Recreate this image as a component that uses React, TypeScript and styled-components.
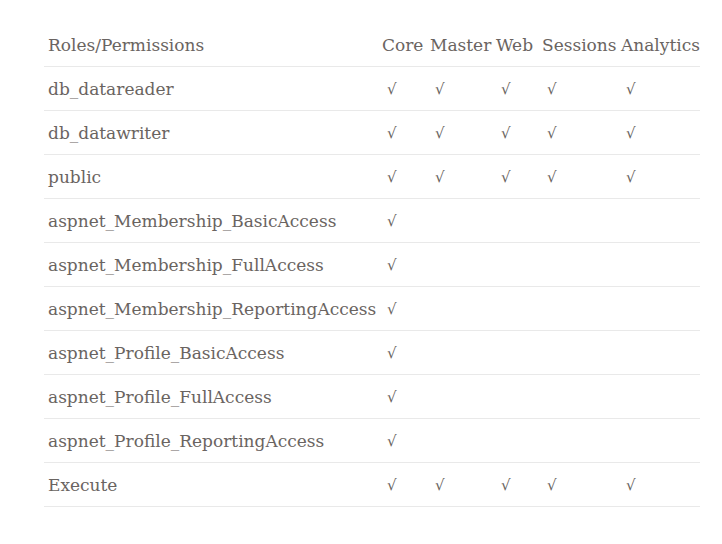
import React from "react";
import styled, { createGlobalStyle } from "styled-components";

const Global = createGlobalStyle`
  html, body { margin: 0; padding: 0; background: #ffffff; }
  body { font-family: "DejaVu Serif", "Liberation Serif", serif; }
`;

const Wrapper = styled.div`
  padding: 23px 22px 0 44px;
`;

const Table = styled.table`
  width: 656px;
  border-collapse: collapse;
  table-layout: fixed;
  color: #6a6461;
  font-size: 17px;

  th, td {
    box-sizing: border-box;
  }
`;

const HeadCell = styled.th<{ $w: number }>`
  width: ${(p) => p.$w}px;
  height: 43px;
  padding: 2px 0 0 4px;
  text-align: left;
  font-weight: normal;
  white-space: nowrap;
  border-bottom: 1px solid #e9e9e9;
`;

const Row = styled.tr``;

const NameCell = styled.td`
  height: 44px;
  padding: 2px 0 0 4px;
  white-space: nowrap;
  border-bottom: 1px solid #e9e9e9;
`;

const CheckCell = styled.td`
  padding: 2px 0 0 9px;
  font-family: "DejaVu Sans", sans-serif;
  font-size: 15px;
  border-bottom: 1px solid #e9e9e9;
`;

const cols: [string, number][] = [
  ["Roles/Permissions", 334],
  ["Core", 48],
  ["Master", 66],
  ["Web", 46],
  ["Sessions", 79],
  ["Analytics", 83],
];

const all = [true, true, true, true, true];
const coreOnly = [true, false, false, false, false];

const rows: [string, boolean[]][] = [
  ["db_datareader", all],
  ["db_datawriter", all],
  ["public", all],
  ["aspnet_Membership_BasicAccess", coreOnly],
  ["aspnet_Membership_FullAccess", coreOnly],
  ["aspnet_Membership_ReportingAccess", coreOnly],
  ["aspnet_Profile_BasicAccess", coreOnly],
  ["aspnet_Profile_FullAccess", coreOnly],
  ["aspnet_Profile_ReportingAccess", coreOnly],
  ["Execute", all],
];

export default function App() {
  return (
    <Wrapper>
      <Global />
      <Table>
        <thead>
          <tr>
            {cols.map(([label, w]) => (
              <HeadCell key={label} $w={w}>
                {label}
              </HeadCell>
            ))}
          </tr>
        </thead>
        <tbody>
          {rows.map(([name, perms]) => (
            <Row key={name}>
              <NameCell>{name}</NameCell>
              {perms.map((p, i) => (
                <CheckCell key={i}>{p ? "√" : ""}</CheckCell>
              ))}
            </Row>
          ))}
        </tbody>
      </Table>
    </Wrapper>
  );
}
